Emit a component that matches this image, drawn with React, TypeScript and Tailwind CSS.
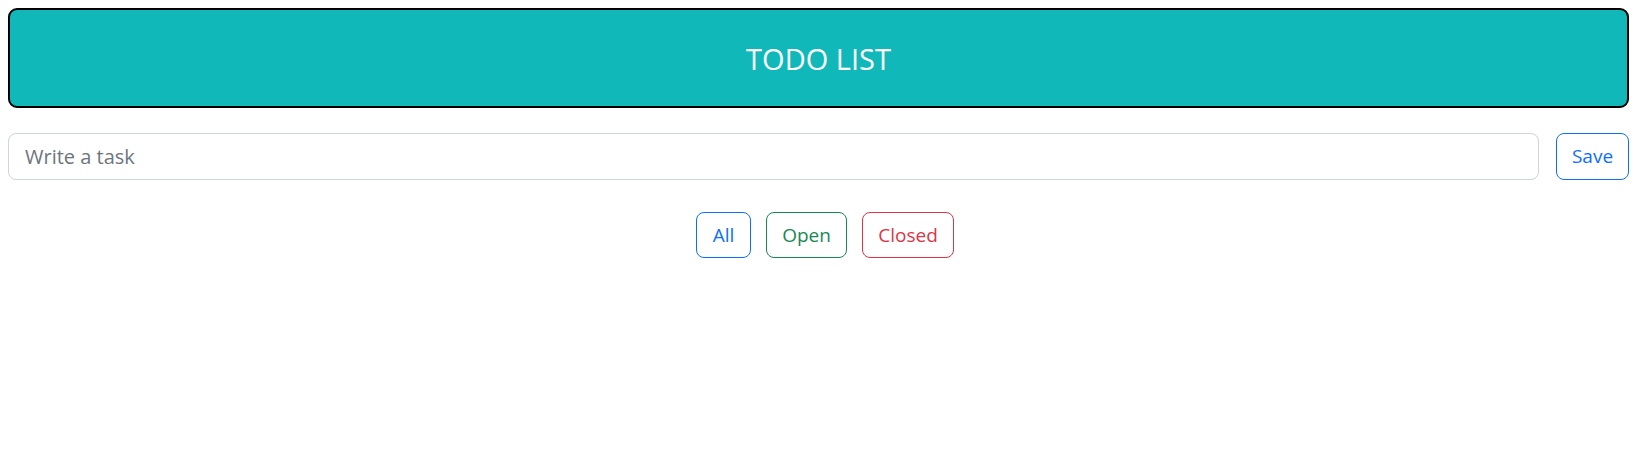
import React, { useState } from 'react';

const FILTERS = [
  { id: 'all', label: 'All', cls: 'border-[#0d6efd] text-[#0d6efd] w-[55px]' },
  { id: 'open', label: 'Open', cls: 'border-[#198754] text-[#198754] w-[81px]' },
  { id: 'closed', label: 'Closed', cls: 'border-[#dc3545] text-[#dc3545] w-[92px]' },
];

export default function App() {
  const [task, setTask] = useState('');

  return (
    <div className="min-h-screen bg-white px-2 pt-2 font-['Open_Sans',sans-serif]">
      {/* Header */}
      <header className="h-[100px] rounded-[9px] border-2 border-black bg-[#10b8b9] flex items-center justify-center">
        <h1 className="text-[29px] text-white leading-none">TODO LIST</h1>
      </header>

      {/* Input row */}
      <div className="mt-[25px] flex gap-[17px]">
        <input
          type="text"
          value={task}
          onChange={(e) => setTask(e.target.value)}
          placeholder="Write a task"
          className="flex-1 h-[47px] rounded-lg border border-[#ced4da] px-4 text-[20px] text-[#212529] placeholder-[#6c757d] focus:outline-none"
        />
        <button className="w-[73px] h-[47px] rounded-lg border border-[#0d6efd] text-[#0d6efd] text-[19px]">
          Save
        </button>
      </div>

      {/* Filters */}
      <div className="mt-[32px] flex justify-center gap-[15px] pl-[13px]">
        {FILTERS.map((f) => (
          <button key={f.id} className={`h-[46px] rounded-lg border text-[19px] ${f.cls}`}>
            {f.label}
          </button>
        ))}
      </div>
    </div>
  );
}
